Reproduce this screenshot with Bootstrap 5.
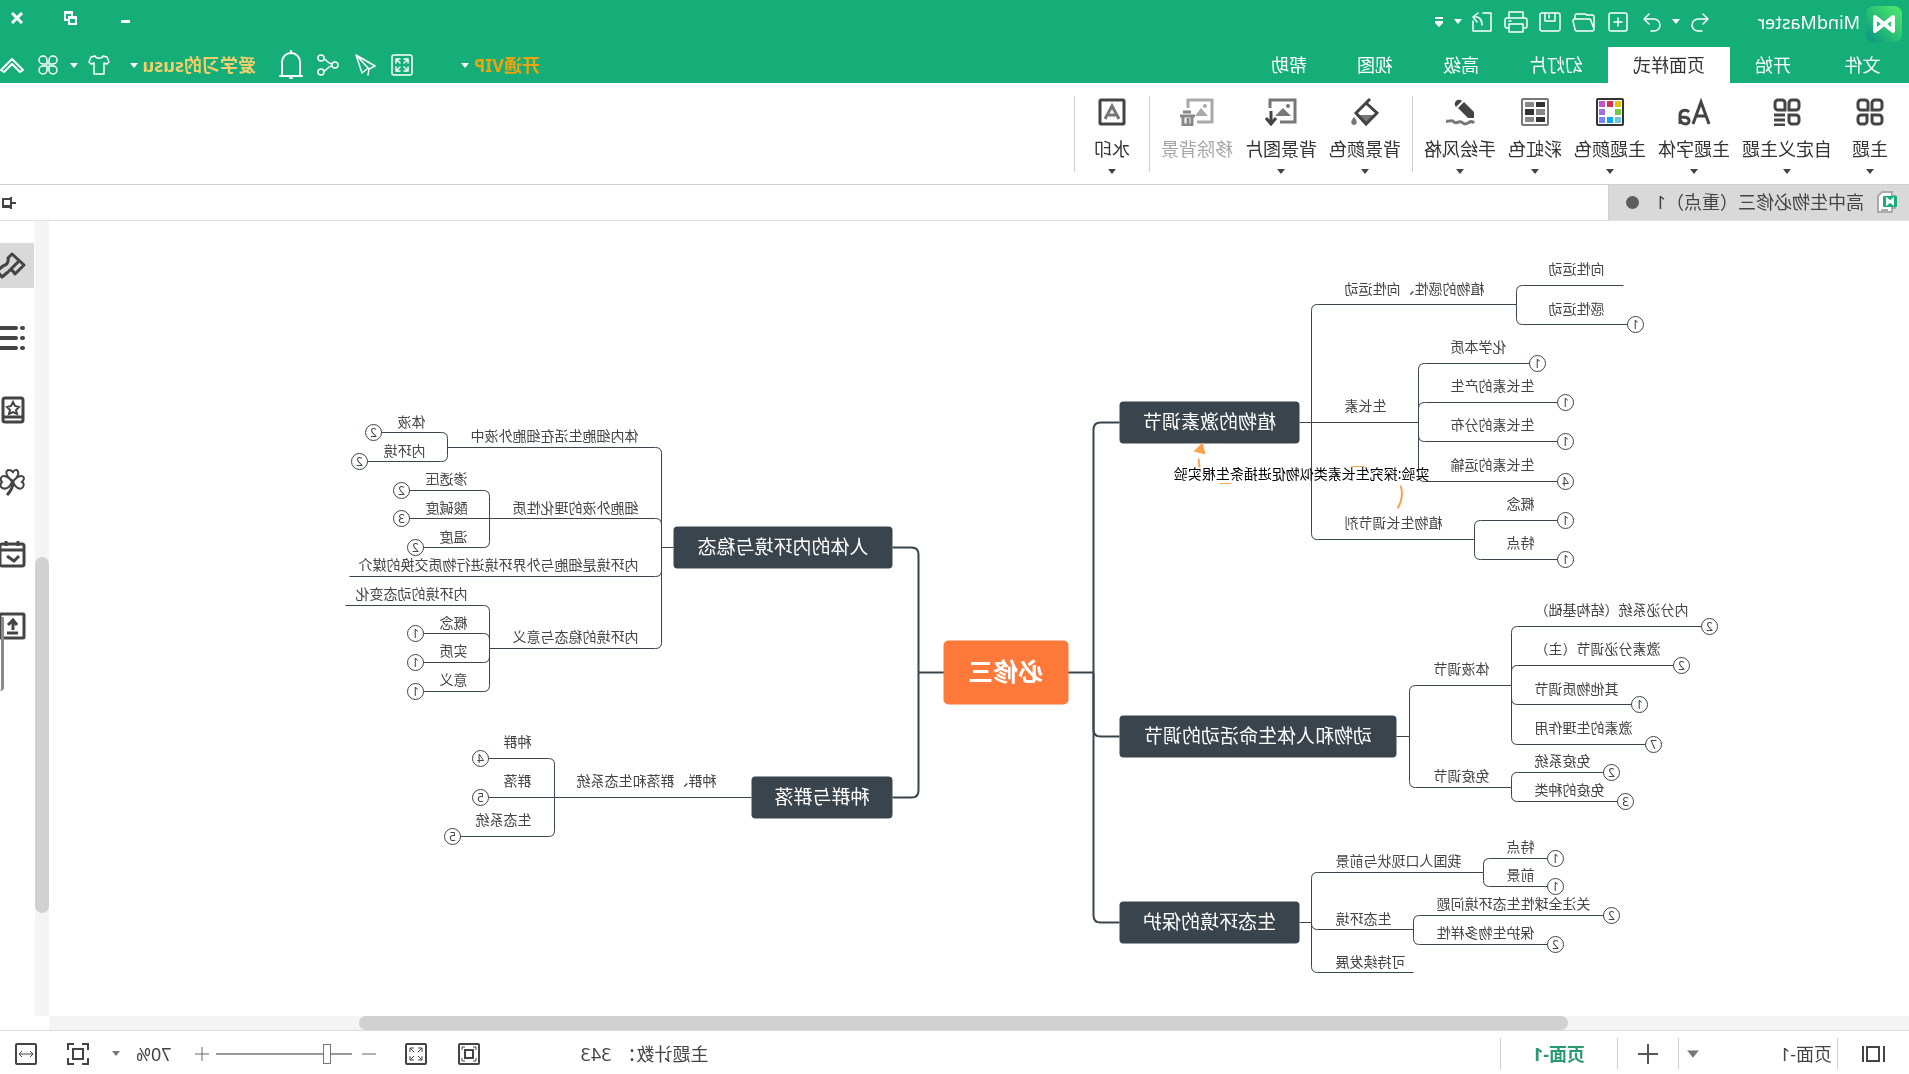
<!DOCTYPE html>
<html lang="zh-CN">
<head>
<meta charset="utf-8">
<meta name="viewport" content="width=device-width, initial-scale=1">
<title>MindMaster</title>
<link href="https://cdn.jsdelivr.net/npm/bootstrap@5.3.0/dist/css/bootstrap.min.css" rel="stylesheet">
<style>
:root{--brand:#16ae78;--ink:#3a444c;--icon:#444;}
body{font-family:"Noto Sans","Noto Sans CJK SC",sans-serif;font-size:18px;line-height:24px;color:#333;background:#fff;}
/* the whole workspace is shown as in a mirror */
.mirror{transform:scaleX(-1);height:100vh;overflow:hidden;}
button,select{font:inherit;color:inherit;}
.plain{background:none;border:0;padding:0;display:inline-flex;align-items:center;justify-content:center;}
svg{display:block;flex:none;}
.ln{fill:none;stroke:currentColor;stroke-width:1.5;stroke-linecap:round;stroke-linejoin:round;}
.topbar{background:var(--brand);color:#fff;}
.titlebar{height:47px;padding:0 0 4px 7px;}
.appname{width:149px;padding-left:6px;}
.w34{width:34px;}
.w28{width:28px;}
.w14{width:14px;}
.w37{width:37px;}
.w30{width:30px;}
.winbtns{gap:20px;}
.menurow{height:36px;}
.menurow .menutab{color:#fff;text-decoration:none;padding:0 25px;display:flex;align-items:center;}
.menurow .filetab{width:93px;padding:0;justify-content:center;}
.menurow .menutab.active{background:#fff;color:#333;}
.vip{color:#f0a30a;font-weight:700;gap:5px;margin-right:40px;}
.user{color:#f3cf6b;font-weight:700;gap:5px;width:138px;margin-left:17px;justify-content:flex-start;}
.white{color:#fff;}
.ribbon{height:102px;padding:13px 0 0 7px;border-bottom:1px solid #d0d0d0;}
.tool{min-width:64px;padding:2px 6px 0;flex-direction:column;justify-content:flex-start;white-space:nowrap;height:80px;color:var(--icon);}
.tool .cap{margin-top:11px;color:#333;}
.tool .caret{margin-top:8px;color:#444;}
.tool:disabled{color:#a0a0a0;}
.tool:disabled .cap{color:#a6a6a6;}
.rule{width:1px;background:#cfcfcf;}
.ribbon .rule{height:76px;margin:0 5px;}
.docrow{height:36px;border-bottom:1px solid #e2e2e2;}
.doctab{width:300px;background:#d9d9d9;padding:0 17px 1px 12px;gap:13px;color:#444;}
.dirty{width:13px;height:13px;background:#5d5d5d;border-radius:50%;}
.work{min-height:0;}
.stage{min-width:0;overflow:hidden;}
.vtrack{width:14px;background:#f4f4f4;padding-top:336px;}
.vthumb{height:356px;background:#d1d1d1;border-radius:7px;}
.htrack{height:14px;background:#f4f4f4;margin-right:14px;}
.hthumb{height:14px;background:#d1d1d1;border-radius:7px;margin-left:calc(18% + 6px);width:65%;}
.side{width:35px;color:var(--icon);padding-top:22px;gap:27px;position:relative;}
.side .plain{height:45px;width:34px;margin-left:1px;padding-left:8px;justify-content:flex-start;overflow:hidden;}
.side .plain.active{background:#d9d9d9;}
.edge{position:absolute;right:0;bottom:339px;width:4px;height:74px;border-left:3px solid #8a8a8a;border-radius:0 0 0 6px;}
.statusbar{height:44px;border-top:1px solid #dcdcdc;padding-top:2px;color:#444;}
.statusbar .rule{height:31px;}
.pagepick{width:158px;}
.pagepick select{appearance:none;border:0;background:none;width:138px;padding:0 0 0 5px;}
.pagetab{width:116px;color:#2a9a6f;font-weight:700;text-decoration:none;}
.count{gap:7px;margin-right:101px;}
.w52{width:52px;}
.w60{width:60px;}
.soft{color:#777;}
.zoombar{appearance:none;width:136px;height:22px;background:linear-gradient(#999,#999) center/100% 2px no-repeat;margin:0;}
.zoombar::-webkit-slider-thumb{appearance:none;width:8px;height:20px;background:#fff;border:1px solid #777;}
.map text{font-size:14px;fill:#444;}
.map .branch{font-size:19px;fill:#fff;}
.map .root{font-size:25px;font-weight:700;fill:#fff;}
.map .note{fill:#000;}
.map .num{font-size:12px;text-anchor:middle;}
.map .thin{fill:none;stroke:var(--ink);stroke-width:1;}
.map .thick{fill:none;stroke:var(--ink);stroke-width:2;}
</style>
</head>
<body>
<div class="mirror d-flex flex-column">
<svg width="0" height="0" class="position-absolute" aria-hidden="true">
 <symbol id="car" viewBox="0 0 8 5"><path d="M0 0h8L4 5z" fill="currentColor"/></symbol>
</svg>
<header class="topbar">
 <div class="titlebar d-flex align-items-center">
  <svg class="mt-1" width="36" height="36" viewBox="0 0 36 36"><defs><linearGradient id="lg" x1="0" y1="0" x2="1" y2="1"><stop offset="0" stop-color="#52ea70"/><stop offset=".6" stop-color="#22bb74"/><stop offset="1" stop-color="#0c8f86"/></linearGradient></defs><rect width="36" height="36" rx="8" fill="url(#lg)"/><path d="M9 25V11L27 25V11z" fill="none" stroke="#fff" stroke-width="4" stroke-linejoin="round"/></svg>
  <span class="appname">MindMaster</span>
  <button class="plain w34" aria-label="撤销"><svg class="ln" width="20" height="20"><path d="M7 2L2 7l5 5M2 7h10a6 6 0 0 1 0 12H8"/></svg></button>
  <button class="plain w14" aria-label="撤销列表"><svg width="8" height="5"><use href="#car"/></svg></button>
  <button class="plain w34" aria-label="恢复"><svg class="ln" width="20" height="20"><path d="M13 2l5 5-5 5M18 7H8a6 6 0 0 0 0 12h3"/></svg></button>
  <button class="plain w34" aria-label="新建"><svg class="ln" width="20" height="20"><rect x="1" y="1" width="18" height="18" rx="2"/><path d="M10 6v8M6 10h8"/></svg></button>
  <button class="plain w34" aria-label="打开"><svg class="ln" width="23" height="20"><path d="M1 17V5a2 2 0 0 1 2-2h5l2-1h8a2 2 0 0 1 2 2v3M1 17a2 2 0 0 0 2 2h15a2 2 0 0 0 2-2l2-8a2 2 0 0 0-2-2H6a2 2 0 0 0-2 2z"/></svg></button>
  <button class="plain w34" aria-label="保存"><svg class="ln" width="22" height="20"><rect x="1" y="1" width="20" height="18" rx="2"/><path d="M6 1v8h10V1M12 3v3"/></svg></button>
  <button class="plain w34" aria-label="打印"><svg class="ln" width="24" height="22"><path d="M5 7V1h14v6M5 17H3a2 2 0 0 1-2-2V9a2 2 0 0 1 2-2h18a2 2 0 0 1 2 2v6a2 2 0 0 1-2 2h-2M5 13h14v8H5zM17 10h2"/></svg></button>
  <button class="plain w34" aria-label="导出"><svg class="ln" width="20" height="20"><path d="M9 1H1v18h18V9M14 1l5 4-4 5M19 5c-6-1-9 2-9 8"/></svg></button>
  <button class="plain w14" aria-label="导出列表"><svg width="8" height="5"><use href="#car"/></svg></button>
  <button class="plain" aria-label="自定义快速访问"><svg class="ms-2" width="8" height="10"><path d="M0 0h8v2H0zM0 4h8v2L4 10 0 6z" fill="#fff"/></svg></button>
  <div class="winbtns d-flex ms-auto pb-2">
   <button class="plain w34" aria-label="最小化"><svg width="10" height="14"><path d="M0 9h9v3H0z" fill="#fff"/></svg></button>
   <button class="plain w34" aria-label="还原"><svg width="13" height="14"><path d="M1 6h7v7H1zM1 7h7M5 5V1h7v8H9M5 2h7" fill="none" stroke="#fff" stroke-width="2"/></svg></button>
   <button class="plain w34" aria-label="关闭"><svg width="12" height="12"><path d="M1 1l10 10M11 1L1 11" stroke="#fff" stroke-width="3"/></svg></button>
  </div>
 </div>
 <nav class="menurow d-flex">
  <a href="#" class="menutab filetab">文件</a><a href="#" class="menutab">开始</a><a href="#" class="menutab active" aria-current="page">页面样式</a><a href="#" class="menutab">幻灯片</a><a href="#" class="menutab">高级</a><a href="#" class="menutab">视图</a><a href="#" class="menutab">帮助</a>
  <div class="d-flex ms-auto">
   <button class="plain vip">开通VIP<svg class="white" width="8" height="5"><use href="#car"/></svg></button>
   <button class="plain w37" aria-label="全屏"><svg class="ln" width="22" height="22"><rect x="1" y="1" width="20" height="20" rx="2"/><path d="M5 9V5h4M5 5l4 4M13 5h4v4M17 5l-4 4M5 13v4h4M5 17l4-4M17 13v4h-4M17 17l-4-4"/></svg></button>
   <button class="plain w37" aria-label="发送"><svg class="ln" width="22" height="22"><path d="M20 1L1 12l6 3 1 6M20 1l-6 18-5-4M20 1L7 15"/></svg></button>
   <button class="plain w37" aria-label="分享"><svg class="ln" width="22" height="22"><circle cx="4" cy="11" r="3"/><circle cx="18" cy="4" r="3"/><circle cx="18" cy="18" r="3"/><path d="M7 10c4 0 5-4 8-5M7 12c4 0 5 4 8 5"/></svg></button>
   <button class="plain w37" aria-label="通知"><svg width="24" height="30" fill="none" stroke="currentColor" stroke-width="2" stroke-linecap="round"><path d="M3 26V12a9 9 0 0 1 18 0v14M1 26h22M12 1v2M11 28h2"/></svg></button>
   <button class="plain user">爱学习的susu<svg class="white" width="8" height="5"><use href="#car"/></svg></button>
   <button class="plain w37" aria-label="皮肤"><svg class="ln" width="22" height="20"><path d="M7 1L3 2 1 7l2 2 3-1v11h10V8l3 1 2-2-2-5-4-1c-1 3-7 3-8 0z"/></svg></button>
   <button class="plain w14" aria-label="皮肤列表"><svg width="8" height="5"><use href="#car"/></svg></button>
   <button class="plain w37" aria-label="应用"><svg class="ln" width="20" height="20"><path d="M9 9H5a4 4 0 1 1 4-4zM11 9V5a4 4 0 1 1 4 4zM9 11v4a4 4 0 1 1-4-4zM11 11h4a4 4 0 1 1-4 4z"/></svg></button>
   <button class="plain w30 justify-content-end" aria-label="收起"><svg width="24" height="18" fill="none" stroke="currentColor" stroke-width="2" stroke-linejoin="round"><path d="M1 14L12 3l11 11-3 2-8-8-8 8z"/></svg></button>
  </div>
 </nav>
</header>

<div class="ribbon d-flex">
 <button class="plain tool"><svg width="28" height="28" fill="none" stroke="currentColor" stroke-width="3"><path d="M5 2h4a3 3 0 0 1 3 3v7H5a3 3 0 0 1-3-3V5a3 3 0 0 1 3-3zM19 2h4a3 3 0 0 1 3 3v4a3 3 0 0 1-3 3h-7V5a3 3 0 0 1 3-3zM5 17h7v6a3 3 0 0 1-3 3H5a3 3 0 0 1-3-3v-3a3 3 0 0 1 3-3zM17 17h6a3 3 0 0 1 3 3v3a3 3 0 0 1-3 3h-3a3 3 0 0 1-3-3z"/></svg><span class="cap">主题</span><svg class="caret" width="8" height="5"><use href="#car"/></svg></button>
 <button class="plain tool"><svg width="28" height="28" fill="none" stroke="currentColor" stroke-width="3"><path d="M5 2h4a3 3 0 0 1 3 3v7H5a3 3 0 0 1-3-3V5a3 3 0 0 1 3-3zM19 2h4a3 3 0 0 1 3 3v4a3 3 0 0 1-3 3h-7V5a3 3 0 0 1 3-3zM5 17h7v6a3 3 0 0 1-3 3H5a3 3 0 0 1-3-3v-3a3 3 0 0 1 3-3zM16 17h11M16 22h11M16 27h11"/></svg><span class="cap">自定义主题</span><svg class="caret" width="8" height="5"><use href="#car"/></svg></button>
 <button class="plain tool"><svg width="34" height="28" fill="none" stroke="currentColor" stroke-width="3"><path d="M2 26l8-22 8 22M5 18h10M22 14c3-3 9-2 9 3v9M31 19c-5 0-9 0-9 4s7 4 9-1"/></svg><span class="cap">主题字体</span><svg class="caret" width="8" height="5"><use href="#car"/></svg></button>
 <button class="plain tool"><svg width="28" height="28"><rect x="1" y="1" width="26" height="26" rx="1" fill="#fff" stroke="#333" stroke-width="2"/><path fill="#e8c10c" d="M3 3h6v6H3z"/><path fill="#d9304f" d="M11 3h6v6h-6z"/><path fill="#c255c6" d="M19 3h6v6h-6z"/><path fill="#7ac943" d="M3 11h6v6H3z"/><path fill="#9b74dd" d="M19 11h6v6h-6z"/><path fill="#70c6d8" d="M3 19h6v6H3z"/><path fill="#00aeef" d="M11 19h6v6h-6z"/><path fill="#7f80ff" d="M19 19h6v6h-6z"/></svg><span class="cap">主题颜色</span><svg class="caret" width="8" height="5"><use href="#car"/></svg></button>
 <button class="plain tool"><svg width="28" height="28"><rect x="1" y="1" width="26" height="26" rx="1" fill="#fff" stroke="#777" stroke-width="2"/><path fill="#333" d="M4 4h9v5H4zM15 11h9v6h-9zM4 19h9v5H4z"/><path fill="#888" d="M15 4h9v5h-9zM4 11h9v6H4zM15 19h9v5h-9z"/></svg><span class="cap">彩虹色</span><svg class="caret" width="8" height="5"><use href="#car"/></svg></button>
 <button class="plain tool"><svg width="30" height="28"><path d="M1 20v-6L11 4l6 6L7 20z" fill="#444"/><path d="M13 3a4 4 0 1 1 6 6z" fill="#444"/><path d="M1 25c4-5 7 4 11 0s7 2 9-1 4 0 8-1" fill="none" stroke="#777" stroke-width="3"/></svg><span class="cap">手绘风格</span><svg class="caret" width="8" height="5"><use href="#car"/></svg></button>
 <div class="rule"></div>
 <button class="plain tool"><svg width="28" height="28"><path d="M5 17h18l-9 9z" fill="#777"/><path d="M9 1l14 14-10 11L2 15 13 5" fill="none" stroke="#444" stroke-width="3"/><path d="M25 19c4 4 3 8 0 8s-4-4 0-8z" fill="#777"/></svg><span class="cap">背景颜色</span><svg class="caret" width="8" height="5"><use href="#car"/></svg></button>
 <button class="plain tool"><svg width="32" height="28"><path d="M27 10V2H2v22h15" fill="none" stroke="#777" stroke-width="3"/><circle cx="9" cy="8" r="2" fill="#777"/><path d="M6 18l8-8 8 8z" fill="#777"/><path d="M26 13v13M21 20l5 6 5-6" fill="none" stroke="#444" stroke-width="3"/></svg><span class="cap">背景图片</span><svg class="caret" width="8" height="5"><use href="#car"/></svg></button>
 <button class="plain tool" disabled><svg width="34" height="28"><path d="M26 10V2H2v22h15" fill="none" stroke="#aaa" stroke-width="3"/><circle cx="9" cy="8" r="2" fill="#aaa"/><path d="M6 18l7-8 6 8z" fill="#aaa"/><path d="M23 14h8M19 18h15M22 18v9h9v-9M26 20v6" fill="none" stroke="#888" stroke-width="3"/></svg><span class="cap">移除背景</span></button>
 <div class="rule"></div>
 <button class="plain tool"><svg width="28" height="28" fill="none"><rect x="2" y="2" width="24" height="24" rx="1" stroke="#444" stroke-width="3"/><path d="M7 21l7-13 7 13M9 17h10" stroke="#777" stroke-width="3"/></svg><span class="cap">水印</span><svg class="caret" width="8" height="5"><use href="#car"/></svg></button>
 <div class="rule"></div>
</div>

<div class="docrow d-flex">
 <div class="doctab d-flex align-items-center">
  <svg width="20" height="22"><path d="M5 1h10l4 4v16H5zM1 5h3M1 17h5M9 19h7" fill="#fff" stroke="#aaa" stroke-width="2"/><rect y="5" width="14" height="11" rx="1" fill="#16ae78"/><path d="M4 13V8l6 5V8z" fill="none" stroke="#fff" stroke-width="2"/></svg>
  <span class="me-auto text-nowrap">高中生物必修三（重点）1</span><span class="dirty"></span>
 </div>
 <div class="rule"></div>
 <button class="plain ms-auto" aria-label="固定面板"><svg width="16" height="12" fill="none" stroke="#444" stroke-width="2"><path d="M0 6h5M5 0v12M5 2h8v8H5M6 9h7"/></svg></button>
</div>

<main class="work d-flex flex-grow-1">
 <div class="stage d-flex flex-column flex-grow-1">
  <div class="d-flex flex-grow-1 work">
   <div class="stage flex-grow-1"><svg class="map w-100 h-100" id="map" role="img" aria-label="必修三 思维导图"></svg></div>
   <div class="vtrack"><div class="vthumb"></div></div>
  </div>
  <div class="htrack"><div class="hthumb"></div></div>
 </div>
 <aside class="side d-flex flex-column">
  <button class="plain active" aria-label="格式"><svg width="27" height="28" fill="none" stroke="currentColor" stroke-width="3" stroke-linejoin="round"><path d="M2 13L14 2l4 4c-1 5 2 7 5 8l6 5-5 6-6-5c-2-3-4-3-7 2zM7 9l10 10"/></svg></button>
  <button class="plain" aria-label="大纲"><svg width="27" height="28" fill="none" stroke="currentColor" stroke-width="4" stroke-linecap="round"><path d="M3 4h1M10 4h20M3 14h1M10 14h20M3 24h1M10 24h20"/></svg></button>
  <button class="plain" aria-label="图标"><svg width="26" height="28" fill="none" stroke="currentColor" stroke-width="3"><rect x="3" y="2" width="20" height="24" rx="2"/><path d="M3 21h20"/><path d="M13 6l2 4 4 1-3 3 1 4-4-2-4 2 1-4-3-3 4-1z" stroke-width="2"/></svg></button>
  <button class="plain" aria-label="剪贴画"><svg width="27" height="28" fill="none" stroke="currentColor" stroke-width="2"><path d="M13 13C6 8 7 2 10 2c2 0 3 2 3 2s2-2 4-2c4 0 4 6-4 11zM13 14C9 7 3 7 2 10c0 2 1 3 2 4-2 1-2 3-1 5 2 3 7 2 10-5zM14 14c4-7 10-7 11-4 1 2 0 3-1 4 1 1 2 3 1 5-3 3-8 2-11-5z"/><path d="M13 14c0 6 2 9 6 13" stroke-width="3"/></svg></button>
  <button class="plain" aria-label="任务"><svg width="27" height="28" fill="none" stroke="currentColor" stroke-width="3"><rect x="2" y="4" width="24" height="22" rx="2"/><path d="M2 10h24M8 1v5M20 1v5M7 16l5 5 7-5"/></svg></button>
  <button class="plain" aria-label="导出"><svg width="27" height="28" fill="none" stroke="currentColor" stroke-width="3"><rect x="2" y="2" width="24" height="24" rx="1"/><path d="M8 21h11M13 18V9M9 13l4-5 5 5"/></svg></button>
  <span class="edge"></span>
 </aside>
</main>

<footer class="statusbar d-flex align-items-center">
 <button class="plain ps-4 pe-4" aria-label="页面视图"><svg width="23" height="16" fill="none" stroke="#444" stroke-width="2"><path d="M1 0v16M22 0v16"/><rect x="6" y="1" width="12" height="14"/></svg></button>
 <div class="rule"></div>
 <div class="pagepick d-flex align-items-center"><select aria-label="当前页面"><option>页面-1</option></select><svg class="soft" width="12" height="8" viewBox="0 0 8 5"><use href="#car"/></svg></div>
 <div class="rule"></div>
 <button class="plain w60" aria-label="添加页面"><svg width="20" height="20" fill="none" stroke="#555" stroke-width="2"><path d="M10 0v20M0 10h20"/></svg></button>
 <div class="rule"></div>
 <a href="#" class="pagetab text-center">页面-1</a>
 <div class="rule"></div>
 <div class="count d-flex ms-auto"><span>主题计数：</span><span>343</span></div>
 <button class="plain" aria-label="适应窗口"><svg width="22" height="22" fill="none" stroke="#444" stroke-width="2"><rect x="1" y="1" width="20" height="20" rx="1"/><rect x="7" y="7" width="8" height="8"/><path d="M4 7V4h3M15 4h3v3M4 15v3h3M15 18h3v-3" stroke-width="1"/></svg></button>
 <button class="plain w52 ms-3" aria-label="全屏显示"><svg width="22" height="22" fill="none" stroke="#444"><rect x="1" y="1" width="20" height="20" rx="1" stroke-width="2"/><path d="M5 9V5h4M5 5l4 4M13 5h4v4M17 5l-4 4M5 13v4h4M5 17l4-4M17 13v4h-4M17 17l-4-4"/></svg></button>
 <button class="plain w34 ms-1" aria-label="缩小"><svg width="14" height="2"><path d="M0 1h14" stroke="#666"/></svg></button>
 <input type="range" class="zoombar" min="0" max="100" value="16" aria-label="缩放">
 <button class="plain w28" aria-label="放大"><svg width="14" height="14" stroke="#666"><path d="M0 7h14M7 0v14"/></svg></button>
 <button class="plain ps-3">70%<svg class="ms-3 soft" width="8" height="5"><use href="#car"/></svg></button>
 <button class="plain w52 ms-2" aria-label="居中显示"><svg width="22" height="22" fill="none" stroke="#444" stroke-width="2"><path d="M1 7V1h6M15 1h6v6M21 15v6h-6M7 21H1v-6"/><rect x="6" y="6" width="10" height="10"/></svg></button>
 <button class="plain w52" aria-label="适应宽度"><svg width="22" height="22" fill="none" stroke="#444" stroke-width="2"><rect x="1" y="1" width="20" height="20" rx="1"/><path d="M4 11h14M7 8l-3 3 3 3M15 8l3 3-3 3" stroke-width="1"/></svg></button>
</footer>
</div>

<script src="https://cdn.jsdelivr.net/npm/bootstrap@5.3.0/dist/js/bootstrap.bundle.min.js"></script>
<script>
// Topic fields: label, label x, label centre y, line y, line end x, badge number, children
const L = (t, tx, ty, y, end, n, kids) => ({t, tx, ty, y, end, n, kids: kids || []});
// side -1 grows to the left of the root, +1 to the right
const branches = [
 {t:'植物的激素调节', x:609, w:180, y:422, side:-1, spine:597, kids:[
  L('植物的感性、向性运动',564,289,304,392,0,[L('向性运动',360,269,285,285),L('感性运动',360,309,324,281,1)]),
  L('生长素',564,406,422,490,0,[L('化学本质',458,347,363,379,1),L('生长素的产生',458,386,402,351,1),L('生长素的分布',458,425,441,351,1),L('生长素的运输',458,465,481,351,4)]),
  L('植物生长调节剂',564,523,539,434,0,[L('概念',402,504,520,351,1),L('特点',402,543,559,351,1)])]},
 {t:'动物和人体生命活动的调节', x:512, w:277, y:736, side:-1, spine:499, kids:[
  L('体液调节',475,669,685,397,0,[L('内分泌系统（结构基础）',374,610,626,207,2),L('激素分泌调节（主）',374,649,665,235,2),L('其他物质调节',374,689,704,277,1),L('激素的生理作用',374,728,744,263,7)]),
  L('免疫调节',475,776,787,397,0,[L('免疫系统',374,761,772,305,2),L('免疫的种类',374,790,801,291,3)])]},
 {t:'生态环境的保护', x:609, w:180, y:922, side:-1, spine:597, kids:[
  L('我国人口现状与前景',573,861,872,425,0,[L('特点',402,847,858,361,1),L('前景',402,875,886,361,1)]),
  L('生态环境',573,919,929,495,0,[L('关注全球性生态环境问题',472,904,915,305,2),L('保护生物多样性',472,933,944,361,2)]),
  L('可持续发展',573,962,972,495)]},
 {t:'人体的内环境与稳态', x:1016, w:219, y:547, side:1, spine:1247, kids:[
  L('体内细胞生活在细胞外液中',1270,436,447,1461,0,[L('体液',1483,422,432,1527,2),L('内环境',1483,451,461,1541,2)]),
  L('细胞外液的理化性质',1270,508,518,1419,0,[L('渗透压',1441,479,490,1499,2),L('酸碱度',1441,508,518,1499,3),L('温度',1441,537,547,1485,2)]),
  L('内环境是细胞与外界环境进行物质交换的媒介',1270,565,576,1559),
  L('内环境的稳态与意义',1270,637,648,1419,0,[L('内环境的动态变化',1441,594,605,1563),L('概念',1441,623,633,1485,1),L('实质',1441,651,662,1485,1),L('意义',1441,680,691,1485,1)])]},
 {t:'种群与群落', x:1016, w:141, y:797, side:1, spine:1354, kids:[
  L('种群',1377,742,758,1420,4),L('群落',1377,781,797,1420,5),L('生态系统',1377,820,836,1448,5)]}
];
const root = {t:'必修三', x:840, w:125, y:672};
let lines = '', tops = '';
const elbow = (sx, fy, ty, end, side, r) => {
  if (Math.abs(ty - fy) < r) return `M${sx} ${ty}H${end}`;
  const d = ty > fy ? 1 : -1;
  return `M${sx} ${fy}V${ty - d * r}Q${sx} ${ty} ${sx + side * r} ${ty}H${end}`;
};
const label = (s, x, y, side) => `<text x="${x}" y="${y + 4}" text-anchor="${side < 0 ? 'end' : 'start'}">${s}</text>`;
function grow(kids, spine, fromY, side) {
  for (const k of kids) {
    lines += `<path class="thin" d="${elbow(spine, fromY, k.y, k.end, side, 6)}"/>`;
    tops += label(k.t, k.tx, k.ty, side);
    if (k.n) tops += `<circle class="thin" cx="${k.end + side * 8}" cy="${k.y}" r="8"/><text class="num" x="${k.end + side * 8}" y="${k.y + 4}">${k.n}</text>`;
    grow(k.kids, k.end, k.y, side);
  }
}
for (const b of branches) {
  const trunk = b.side < 0 ? 815 : 990, near = b.side < 0 ? b.x + b.w : b.x, far = b.side < 0 ? b.x : b.x + b.w;
  lines += `<path class="thick" d="${elbow(trunk, root.y, b.y, near, b.side, 7)}"/><path class="thin" d="M${far} ${b.y}H${b.spine}"/>`;
  tops += `<rect x="${b.x}" y="${b.y - 21}" width="${b.w}" height="42" rx="4" fill="#3a444c"/><text class="branch" text-anchor="middle" x="${b.x + b.w / 2}" y="${b.y + 6}">${b.t}</text>`;
  grow(b.kids, b.spine, b.y, b.side);
}
tops += label('种群、群落和生态系统', 1192, 781, 1);
lines += `<path class="thick" d="M815 672H990"/>`;
tops += `<rect x="840" y="640" width="125" height="64" rx="5" fill="#ff793b"/><text class="root" text-anchor="middle" x="903" y="680">必修三</text>`;
tops += `<g fill="none" stroke="#f9a350" stroke-width="2"><path d="M511 508Q504 496 508 485M709 467l1-9"/><path d="M544 466h13M677 483h12" stroke-width="1"/></g><path d="M706 442l9 9-12 3z" fill="#f9a350"/><text class="note" x="479" y="478">实验:探究生长素类似物促进插条生根实验</text>`;
// page coordinates start at the window's top; the canvas begins 221px lower
document.getElementById('map').innerHTML = `<g transform="translate(.5 -220.5)">${lines}${tops}</g>`;
</script>
</body>
</html>
